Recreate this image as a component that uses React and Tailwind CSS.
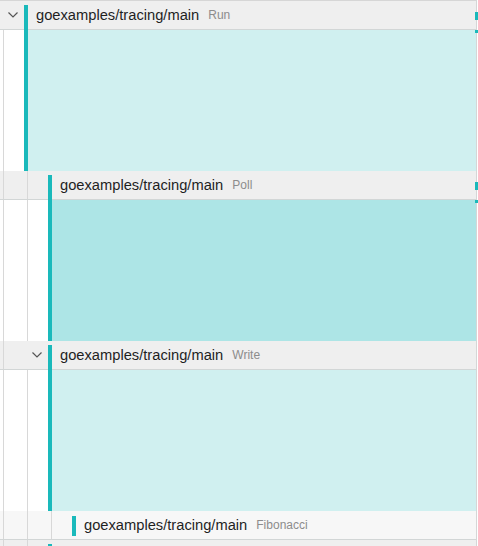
import React from "react";

const rows = [
  { level: 0, tag: "Run", chevron: true, content: "light", marker: true },
  { level: 1, tag: "Poll", content: "dark", marker: true },
  { level: 1, tag: "Write", chevron: true, content: "light" },
  { level: 2, tag: "Fibonacci", leaf: true },
  { level: 1, content: "light", partial: true },
];

const Chevron = () => (
  <div className="w-6 shrink-0 flex items-center justify-center">
    <svg width="10" height="6" viewBox="0 0 10 6" className="ml-[2px]">
      <polyline points="0.5,0.5 5,5 9.5,0.5" fill="none" stroke="#555" strokeWidth="1.2" />
    </svg>
  </div>
);

const Guide = () => <div className="w-[21px] ml-[3px] shrink-0 border-l border-[#d8d8d8]" />;

const Guides = ({ level, chevron }) => (
  <>
    {Array.from({ length: level + 1 }).map((_, i) =>
      chevron && i === level ? <Chevron key={i} /> : <Guide key={i} />
    )}
  </>
);

const Row = ({ row }) => {
  const headerBg = row.leaf ? "bg-[#f7f7f7]" : "bg-[#efefef]";
  return (
    <div className="flex flex-col">
      <div className={`relative flex h-[29px] border-b border-[#d2d6d6] ${headerBg}`}>
        <Guides level={row.level} chevron={row.chevron} />
        <div className={`w-1 shrink-0 bg-[#1ab9bb] ${row.leaf ? "mt-[5px] mb-[3px]" : "mt-1 -mb-px"}`} />
        {!row.partial && (
          <div className="flex items-center gap-[9px] pl-2">
            <span className="text-[14.7px] text-[#1f1f1f]">goexamples/tracing/main</span>
            <span className="text-[12px] text-[#8c8c8c]">{row.tag}</span>
          </div>
        )}
        {row.marker && <div className="absolute right-[-2px] top-[11px] h-2 w-[3px] bg-[#1ab9bb]" />}
        {row.marker && <div className="absolute right-[-2px] top-[29px] h-[3px] w-[3px] bg-[#1ab9bb]" />}
      </div>
      {!row.leaf && (
        <div className="flex h-[141px] bg-white">
          <Guides level={row.level} />
          <div className="w-1 shrink-0 bg-[#1ab9bb]" />
          <div className={`flex-1 ${row.content === "dark" ? "bg-[#ade5e6]" : "bg-[#d0f0f0]"}`} />
        </div>
      )}
    </div>
  );
};

export default function App() {
  return (
    <div className="w-[478px] h-[546px] overflow-hidden bg-white font-['Liberation_Sans',Arial,sans-serif]">
      <div className="w-[477px] border-t border-r border-[#d6d6d6]">
        {rows.map((row, i) => (
          <Row key={i} row={row} />
        ))}
      </div>
    </div>
  );
}
